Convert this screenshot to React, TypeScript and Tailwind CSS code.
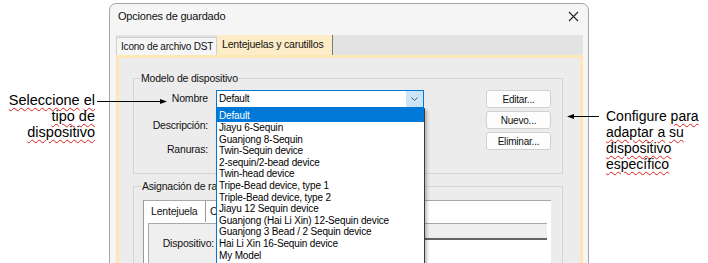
const deviceModels = [
  "Default",
  "Jiayu 6-Sequin",
  "Guanjong 8-Sequin",
  "Twin-Sequin device",
  "2-sequin/2-bead device",
  "Twin-head device",
  "Tripe-Bead device, type 1",
  "Triple-Bead device, type 2",
  "Jiayu 12 Sequin device",
  "Guanjong (Hai Li Xin) 12-Sequin device",
  "Guanjong 3 Bead / 2 Sequin device",
  "Hai Li Xin 16-Sequin device",
  "My Model",
]

const squiggle = "underline decoration-wavy decoration-[#e02020] decoration-1 underline-offset-[2px]"

function Spell({ children }: { children: string }) {
  return <span className={squiggle}>{children}</span>
}

function DropdownList() {
  return (
    <div className="absolute left-[216px] top-[108px] w-[209px] h-[170px] bg-white border border-[#0078d7] border-r-[#3a3a3a] shadow-[2px_2px_3px_rgba(0,0,0,0.25)] text-[10px] tracking-[-0.15px] text-black">
      {deviceModels.map((name, i) =>
        i === 0 ? (
          <div key={i} className="h-[13px] leading-[13px] pl-[2px] bg-[#0078d7] text-white">
            {name}
          </div>
        ) : (
          <div key={i} className="h-[11.6px] leading-[11.6px] pl-[2px] whitespace-nowrap">
            {name}
          </div>
        )
      )}
    </div>
  )
}

function Arrows() {
  return (
    <svg className="absolute left-0 top-0 pointer-events-none" width="708" height="263">
      <line x1="97" y1="101.5" x2="162" y2="101.5" stroke="#000" strokeWidth="1" />
      <polygon points="167,101.5 160,99 160,104" fill="#000" />
      <line x1="572" y1="116.5" x2="599" y2="116.5" stroke="#000" strokeWidth="1" />
      <polygon points="567,116.5 574,114 574,119" fill="#000" />
    </svg>
  )
}

function Button({ label }: { label: string }) {
  return (
    <div className="w-[65px] h-[18px] rounded-[3px] border border-[#d0d0d0] bg-[#fdfdfd] flex items-center justify-center text-[10px] text-[#111]">
      {label}
    </div>
  )
}

function Dialog() {
  return (
    <div className="mt-[3px] w-[480px] h-[290px] shrink-0 rounded-t-[7px] border border-[#a6a6a6] bg-[#f5f5f5] flex flex-col text-[10.5px] tracking-[-0.2px] text-[#111]">
      {/* title bar */}
      <div className="h-[31px] shrink-0 flex items-start justify-between pl-[8px] pr-[9px] pt-[6px]">
        <span className="leading-[13px] text-[11px]">Opciones de guardado</span>
        <svg width="11" height="11" viewBox="0 0 11 11" className="mt-[1px]">
          <path d="M1 1 L10 10 M10 1 L1 10" stroke="#222" strokeWidth="1.1" />
        </svg>
      </div>

      <div className="flex-1 flex flex-col pl-[6px] pr-[5px]">
        {/* tab strip */}
        <div className="h-[20px] shrink-0 flex items-end bg-[#e3e3e3]">
          <div className="h-[18px] w-[101px] border border-b-0 border-[#cfcfcf] bg-[#f6f6f6] pl-[4px] leading-[17px] text-[10px] whitespace-nowrap">
            Icono de archivo DST
          </div>
          <div className="h-[20px] w-[116px] border-r border-[#7a7a7a] bg-[#fdecc8] pl-[5px] leading-[19px] whitespace-nowrap">
            Lentejuelas y carutillos
          </div>
        </div>

        {/* tab page */}
        <div className="flex-1 border-[3px] border-[#fde7b5] bg-[#ececec] flex flex-col">
          {/* Modelo de dispositivo */}
          <div className="relative mt-[20px] ml-[14px] mr-[17px] h-[96px] border border-[#d4d4d4] flex pt-[11px]">
            <span className="absolute -top-[7px] left-[6px] px-[1px] bg-[#ececec] leading-[13px]">
              Modelo de dispositivo
            </span>
            <div className="flex flex-col">
              <div className="flex items-center h-[18px]">
                <span className="w-[74px] text-right">Nombre</span>
                <div className="ml-[8px] w-[208px] h-[18px] border border-[#0078d7] bg-white flex">
                  <span className="flex-1 pl-[2px] leading-[16px] text-[10px] text-black">Default</span>
                  <div className="w-[17px] h-full bg-[#cce4f7] flex items-center justify-center">
                    <svg width="7" height="4" viewBox="0 0 7 4">
                      <path d="M0.5 0.5 L3.5 3.5 L6.5 0.5" stroke="#444" strokeWidth="0.9" fill="none" />
                    </svg>
                  </div>
                </div>
              </div>
              <div className="flex items-center h-[18px] mt-[9px]">
                <span className="w-[74px] text-right">Descripción:</span>
                <div className="ml-[8px] w-[208px] h-[18px] border border-[#b0b0b0] bg-white" />
              </div>
              <div className="flex items-center h-[18px] mt-[6px]">
                <span className="w-[74px] text-right">Ranuras:</span>
                <div className="ml-[8px] w-[60px] h-[18px] border border-[#b0b0b0] bg-white" />
              </div>
            </div>
            <div className="ml-auto mr-[11px] flex flex-col gap-[3px]">
              <Button label="Editar..." />
              <Button label="Nuevo..." />
              <Button label="Eliminar..." />
            </div>
          </div>

          {/* Asignación de ranuras */}
          <div className="relative mt-[12px] ml-[14px] mr-[17px] flex-1 border border-b-0 border-[#d4d4d4] flex flex-col">
            <span className="absolute -top-[7px] left-[7px] px-[1px] bg-[#ececec] leading-[13px]">
              Asignación de ranuras
            </span>
            <div className="mt-[13px] ml-[9px] mr-[11px] flex-1 flex flex-col border-l border-[#9a9a9a] bg-white">
              <div className="h-[22px] shrink-0 flex border-t border-[#a8a8a8]">
                <div className="w-[62px] border-r border-[#9a9a9a] pl-[7px] leading-[21px]">Lentejuela</div>
                <div className="pl-[4px] leading-[21px]">Carutillo</div>
              </div>
              <div className="flex-1 pl-[4px] pr-[4px] pt-[1px]">
                <div className="h-full border-t border-l border-[#a8a8a8] bg-[#efefef] flex flex-col">
                  <div className="h-[14px] shrink-0" />
                  <div className="flex items-start flex-1">
                    <span className="w-[65px] text-right leading-[13px] mt-[-1px]">Dispositivo:</span>
                    <div className="ml-[3px] flex-1 h-full border-t-2 border-[#646464] bg-white" />
                  </div>
                </div>
              </div>
            </div>
          </div>
        </div>
      </div>
    </div>
  )
}

export default function App() {
  return (
    <div
      className="relative flex w-[708px] h-[263px] overflow-hidden bg-white"
      style={{ fontFamily: '"Liberation Sans", Arial, sans-serif' }}
    >
      <div className="w-[109px] shrink-0 flex flex-col items-end pt-[92px] pr-[14px] text-[14.5px] leading-[16px] text-black">
        <span>
          <Spell>Seleccione</Spell> <Spell>el</Spell>
        </span>
        <span>
          <Spell>tipo</Spell> <Spell>de</Spell>
        </span>
        <span>
          <Spell>dispositivo</Spell>
        </span>
      </div>

      <Dialog />

      <div className="flex-1 flex flex-col pl-[17px] pt-[108px] text-[14px] leading-[16px] text-black">
        <span>
          Configure <Spell>para</Spell>
        </span>
        <span>
          <Spell>adaptar</Spell> <Spell>a</Spell> <Spell>su</Spell>
        </span>
        <span>
          <Spell>dispositivo</Spell>
        </span>
        <span>
          <Spell>específico</Spell>
        </span>
      </div>

      <DropdownList />
      <Arrows />
    </div>
  )
}
